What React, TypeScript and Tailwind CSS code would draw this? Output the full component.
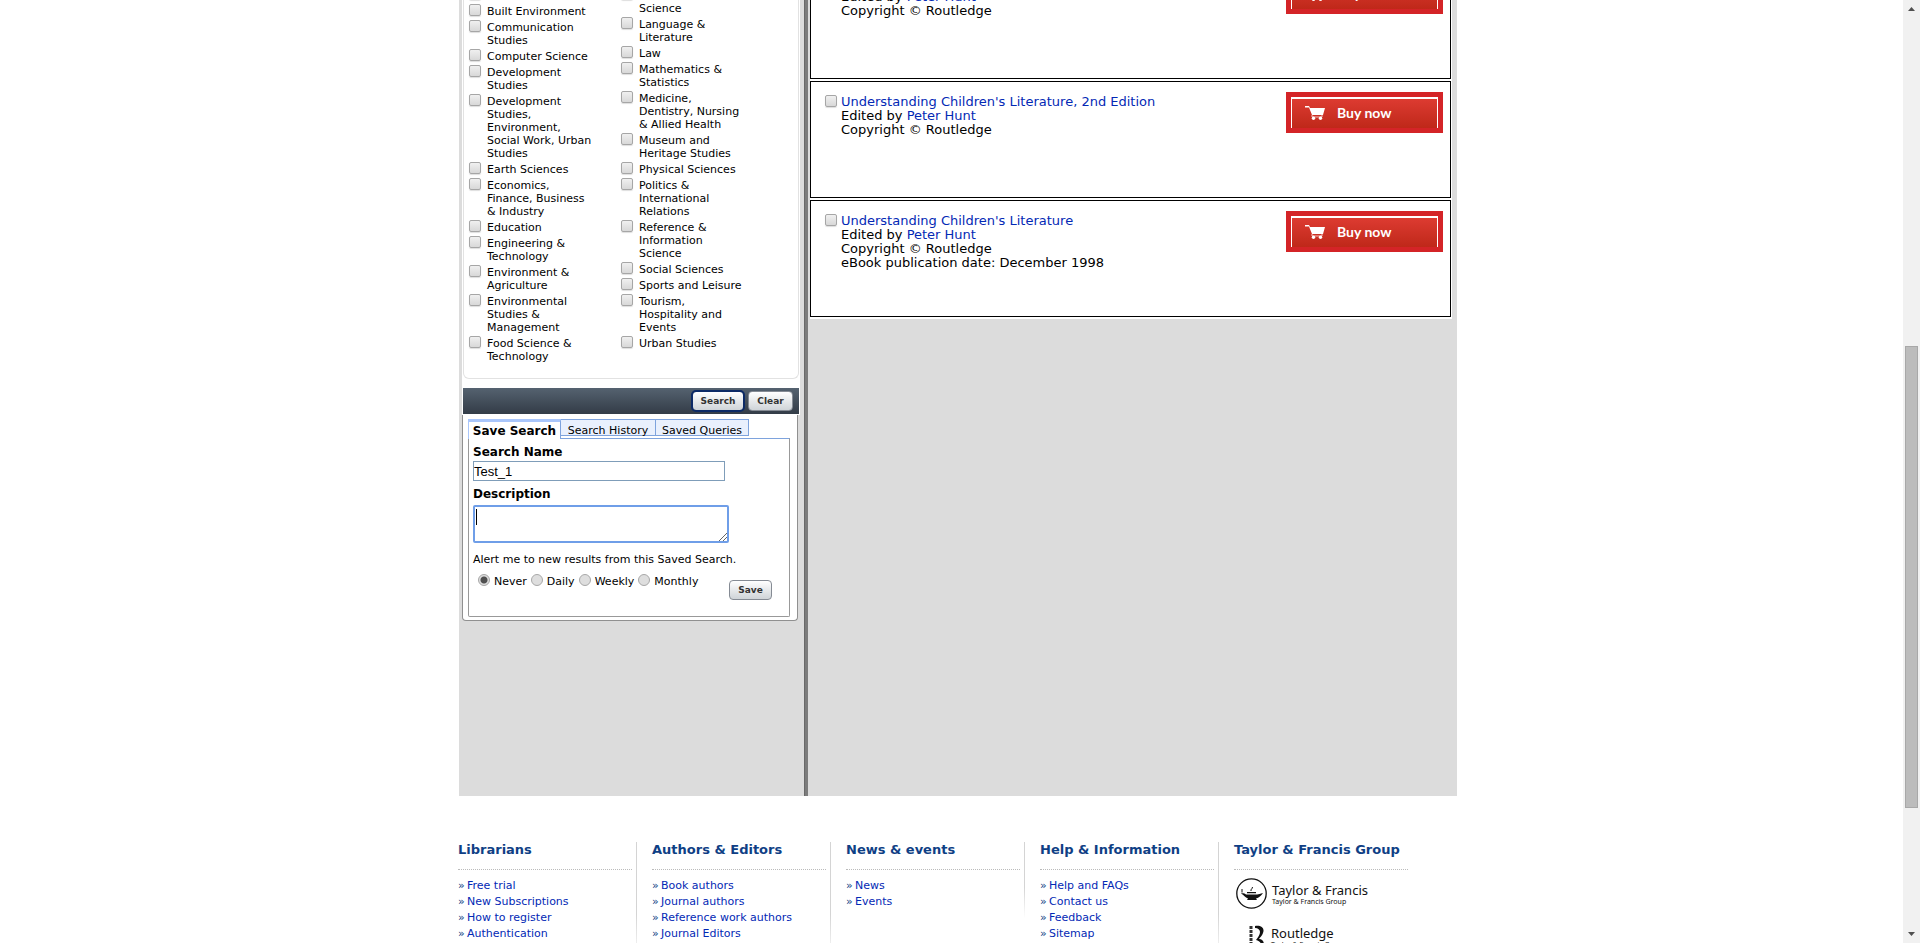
import type { ReactNode } from 'react';

const leftSubjects = [
  'Bioscience', 'Built Environment', 'Communication Studies', 'Computer Science', 'Development Studies',
  'Development Studies, Environment, Social Work, Urban Studies', 'Earth Sciences',
  'Economics, Finance, Business & Industry', 'Education', 'Engineering & Technology',
  'Environment & Agriculture', 'Environmental Studies & Management', 'Food Science & Technology',
];
const rightSubjects = [
  'Information Science', 'Language & Literature', 'Law', 'Mathematics & Statistics',
  'Medicine, Dentistry, Nursing & Allied Health', 'Museum and Heritage Studies', 'Physical Sciences',
  'Politics & International Relations', 'Reference & Information Science', 'Social Sciences',
  'Sports and Leisure', 'Tourism, Hospitality and Events', 'Urban Studies',
];
const books = [
  { title: "International Companion Encyclopedia of Children's Literature" },
  { title: "Understanding Children's Literature, 2nd Edition" },
  { title: "Understanding Children's Literature", date: 'December 1998' },
];

const checkClass =
  'size-3 shrink-0 appearance-none rounded-xs border border-[#a6a6a6] bg-linear-to-b from-[#f0f0f0] to-[#d8d8d8] shadow-[0_1px_1px_#0002] checked:bg-[#888]';
const radioClass =
  'size-3 shrink-0 appearance-none rounded-full border border-[#a8a8a8] bg-[#dedede] checked:bg-[radial-gradient(circle,#505050_0_3px,#dedede_4px)]';
const buttonClass =
  'h-5 rounded-sm border border-[#858b94] bg-linear-to-b from-white to-[#cfd4d8] text-[9px] leading-none font-bold text-[#333]';

function SubjectList({ items }: { items: string[] }) {
  return (
    <ul className="flex w-[152px] flex-col gap-[2px]">
      {items.map((item) => (
        <li key={item}>
          <label className="flex items-start gap-[6px]">
            <input type="checkbox" className={checkClass} />
            <span className="w-[106px] pt-px">{item}</span>
          </label>
        </li>
      ))}
    </ul>
  );
}

function BuyButton() {
  return (
    <button className="h-[41px] w-[157px] shrink-0 self-start bg-[#d42427] p-[5px] text-white">
      <span className="flex h-[31px] items-center border-x border-t-2 border-white bg-linear-to-b from-[#dd3b31] to-[#bf2819] pb-[2px] pl-[13px]">
        <svg viewBox="0 0 20 14" className="h-[14px] w-5" aria-hidden="true">
          <path d="M0 0h4l1 2h15l-2 7H7L4 1.500H0z" fill="#fff" />
          <path d="M7 9v2h10V9" fill="none" stroke="#f3c3bd" />
          <circle cx="8.500" cy="12.300" r="1.700" fill="#fff" />
          <circle cx="15.500" cy="12.300" r="1.700" fill="#fff" />
        </svg>
        <span className="pl-[12px] font-['Lato',sans-serif] text-[14px] leading-4 font-bold">Buy now</span>
      </span>
    </button>
  );
}

function FooterColumn({ title, links, fade = 'h-[120px]', children }: { title: string; links?: string[]; fade?: string; children?: ReactNode }) {
  return (
    <section className="flex w-[194px] items-start gap-1">
      <div className="w-[174px]">
        <h2 className="border-b border-dotted border-[#bbb] pb-[19px] text-[13px] leading-4 font-bold whitespace-nowrap text-[#0f3f85]">
          <span className="block h-2 leading-4">{title}</span>
        </h2>
        {links && (
          <ul className="pt-[8px] text-[11px] leading-4">
            {links.map((l) => (
              <li key={l} className="flex gap-[3px] text-[#0f3f85]">
                <span className="w-[6px]">»</span>
                <a href="#" className="whitespace-nowrap text-[#0329b5]">{l}</a>
              </li>
            ))}
          </ul>
        )}
        {children}
      </div>
      {links && <div className={`${fade} w-px bg-linear-to-b from-[#d4d4d4] from-60% to-white`} />}
    </section>
  );
}

function SaveSearch() {
  return (
    <div className="mr-[2px] ml-px rounded-b-sm border border-t-0 border-[#909090] bg-white pt-1 pr-[7px] pb-[3px] pl-[5px]">
      <div className="flex h-[19px] items-start text-[11px] leading-[14px]">
        <button className="z-10 h-5 w-[93px] border-x border-t-3 border-[#a9c6fb] border-r-[#7ea3dd] bg-white text-[12px] font-bold whitespace-nowrap">Save Search</button>
        <button className="h-[17px] w-[95px] border border-l-0 border-[#7ea3dd] bg-[#e9f0fd] pt-[7px] leading-[8px] whitespace-nowrap">Search History</button>
        <button className="h-[17px] w-[93px] border border-l-0 border-[#7ea3dd] bg-[#e9f0fd] pt-[7px] leading-[8px] whitespace-nowrap">Saved Queries</button>
      </div>
      <form className="flex h-[179px] flex-col rounded-b-xs border border-[#999] border-t-[#7ea3dd] pt-[5px] pl-1" onSubmit={(e) => e.preventDefault()}>
        <label htmlFor="name" className="text-[12px] leading-4 font-bold">Search Name</label>
        <input id="name" defaultValue="Test_1" className="mt-px h-5 w-[252px] border border-[#7f9db9] font-['Liberation_Sans',sans-serif] text-[13px]" />
        <label htmlFor="desc" className="mt-[5px] text-[12px] leading-4 font-bold">Description</label>
        <div className="relative mt-[3px] h-[38px] w-[256px]">
          <textarea id="desc" className="block h-[38px] w-[256px] resize-none rounded-xs border-2 border-[#6f9ee8] outline-none" />
          <span className="absolute top-1 left-[3px] h-4 w-px bg-black" />
          <svg viewBox="0 0 8 8" className="absolute right-[2px] bottom-[2px] size-2" stroke="#666" aria-hidden="true">
            <path d="M0 8 8 0M4 8l4-4" />
          </svg>
        </div>
        <fieldset className="text-[11px] leading-3">
          <legend className="pt-[11px]">Alert me to new results from this Saved Search.</legend>
          <div className="flex pt-2 pl-[5px]">
            {['Never', 'Daily', 'Weekly', 'Monthly'].map((v, i) => (
              <label key={v} className="mr-1 flex items-start gap-1">
                <input type="radio" name="alert" defaultChecked={i === 0} className={radioClass} />
                <span className="pt-[2px]">{v}</span>
              </label>
            ))}
          </div>
        </fieldset>
        <button className={`${buttonClass} -mt-2 mr-[17px] w-[43px] self-end`}>Save</button>
      </form>
    </div>
  );
}

export default function App() {
  return (
    <div className="flex h-screen overflow-hidden bg-white font-['DejaVu_Sans',sans-serif] text-black">
      <div className="min-w-0 flex-1">
        <div className="mx-auto max-w-[1011px] pl-3">
          <main className="ml-px flex min-h-[796px] bg-[#dcdcdc]">
            <aside className="w-[345px] shrink-0 pr-1 pl-[2px]">
              <div className="ml-px bg-white px-px pb-[9px]">
                <div className="rounded-b-md border border-t-0 border-[#e2e2e2] pb-[15px] pl-[5px]">
                  <div className="-mt-3 flex text-[11px] leading-[13px]">
                    <SubjectList items={leftSubjects} />
                    <SubjectList items={rightSubjects} />
                  </div>
                </div>
              </div>
              <div className="ml-px bg-white px-px pb-px">
                <div className="flex h-[26px] items-center justify-end gap-1 bg-linear-to-b from-[#556270] to-[#333c47] pr-[6px]">
                  <button className={`${buttonClass} w-[52px] outline-2 -outline-offset-1 outline-[#0c2a66]`}>Search</button>
                  <button className={`${buttonClass} w-[45px]`}>Clear</button>
                </div>
              </div>
              <SaveSearch />
            </aside>
            <div className="w-1 shrink-0 border-l border-[#696969] bg-[#7c7c7c]" />
            <section className="min-w-0 flex-1 pr-[5px] pl-[2px]">
              <div className="-mt-[38px] flex flex-col gap-[2px] bg-white pr-px pb-[2px]">
                {books.map((b) => (
                  <article key={b.title} className="flex h-[117px] border border-black pt-[10px] pr-[7px] pl-[14px] text-[13px] leading-[14px]">
                    <input type="checkbox" aria-label={b.title} className={`${checkClass} mt-[3px] mr-1`} />
                    <div className="flex-1 pt-[3px]">
                      <a href="#" className="text-[#0329b5]">{b.title}</a>
                      <p>Edited by <a href="#" className="text-[#0329b5]">Peter Hunt</a></p>
                      <p>Copyright © Routledge</p>
                      {b.date && <p>eBook publication date: {b.date}</p>}
                    </div>
                    <BuyButton />
                  </article>
                ))}
              </div>
            </section>
          </main>
          <footer className="mt-[46px] flex">
            <FooterColumn title="Librarians" links={['Free trial', 'New Subscriptions', 'How to register', 'Authentication']} />
            <FooterColumn title="Authors & Editors" links={['Book authors', 'Journal authors', 'Reference work authors', 'Journal Editors']} />
            <FooterColumn title="News & events" links={['News', 'Events']} fade="h-[76px]" />
            <FooterColumn title="Help & Information" links={['Help and FAQs', 'Contact us', 'Feedback', 'Sitemap']} />
            <FooterColumn title="Taylor & Francis Group">
              <div className="flex items-center gap-[5px] pt-2 pl-[2px]">
                <svg viewBox="0 0 31 31" className="size-[31px]" aria-hidden="true">
                  <circle cx="15.500" cy="15.500" r="14.700" fill="none" stroke="#111" strokeWidth="1.300" />
                  <path d="M5 15.500c2-.5 4 .3 5 1h11c2 0 3-1 6-1.500-2 3-4 4.500-7 5.500l1 1.500H11l1-1.500c-3-1-4-3.500-7-5zM11 14h9v1.200h-9z" fill="#111" />
                  <path d="M6 11v3.500M15 13c-.5-2 1.500-2 1.500-4" fill="none" stroke="#111" />
                </svg>
                <div className="font-['Noto_Sans',sans-serif] whitespace-nowrap text-[#111]">
                  <p className="text-[13px] leading-4">Taylor &amp; Francis</p>
                  <p className="text-[7px] leading-2">Taylor &amp; Francis Group</p>
                </div>
              </div>
              <div className="flex gap-[5px] pt-4 pl-[14px]">
                <svg viewBox="0 0 18 31" className="h-[31px] w-[18px]" aria-hidden="true">
                  <path d="M7 1c6-1 10 2 8 7-1 3-3 4-4 6 3 0 5 2 5 6h-3c0-3-2-4-5-5 2-3 4-5 4-8 0-2-2-4-5-4z" fill="#111" />
                  <path d="M3 1v28" stroke="#333" strokeWidth="3" strokeDasharray="3 1" />
                </svg>
                <div className="font-['Noto_Sans',sans-serif] whitespace-nowrap text-[#111]">
                  <p className="text-[13px] leading-4">Routledge</p>
                  <p className="text-[7px] leading-2">Taylor &amp; Francis Group</p>
                </div>
              </div>
            </FooterColumn>
          </footer>
        </div>
      </div>
      <div className="flex w-[17px] shrink-0 flex-col items-center justify-between bg-[#f1f1f1] py-[7px]" aria-hidden="true">
        <svg viewBox="0 0 7 4" className="h-1 w-[7px]"><path d="M0 4 3.500 0 7 4z" fill="#505050" /></svg>
        <div className="flex w-full flex-1 flex-col px-[2px]">
          <div className="grow-[336]" />
          <div className="grow-[462] border border-[#a8a8a8] bg-[#bcbcbc]" />
          <div className="grow-[124]" />
        </div>
        <svg viewBox="0 0 7 4" className="h-1 w-[7px]"><path d="M0 0 3.500 4 7 0z" fill="#505050" /></svg>
      </div>
    </div>
  );
}
